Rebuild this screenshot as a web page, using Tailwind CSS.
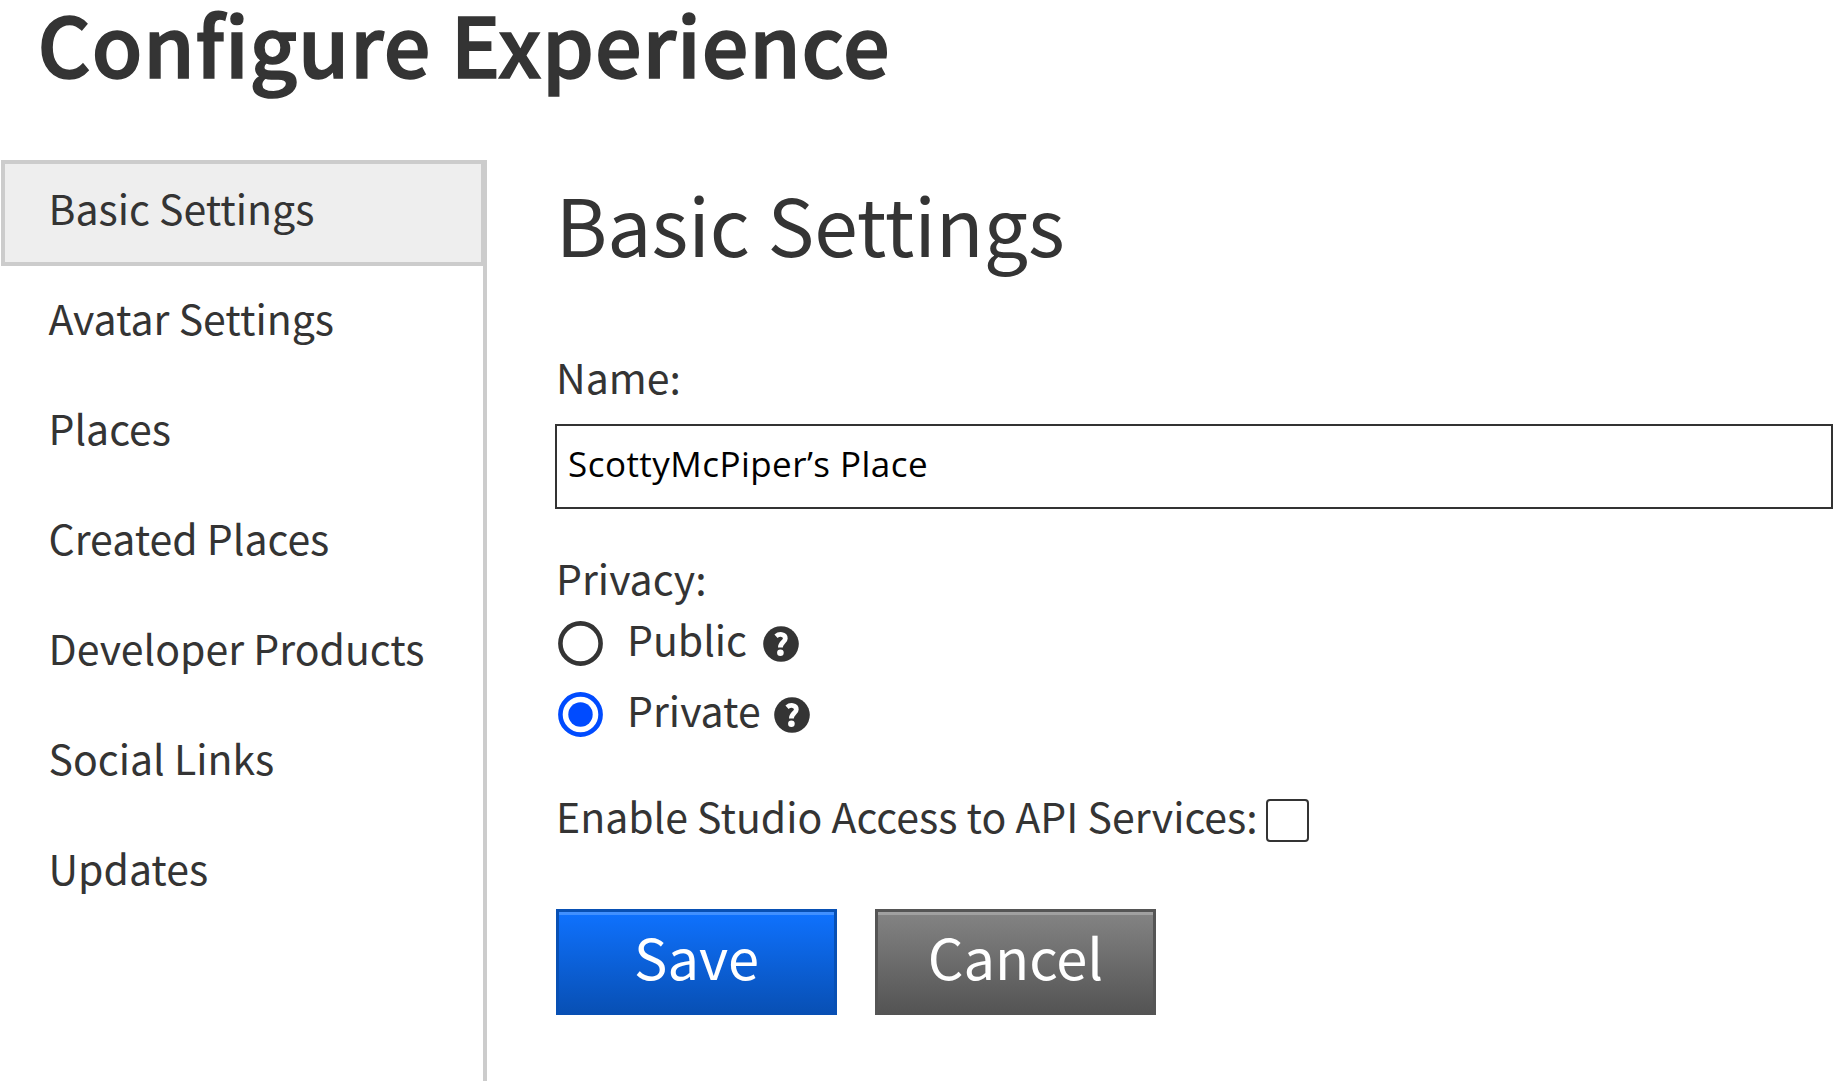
<!DOCTYPE html>
<html lang="en">
<head>
<meta charset="utf-8">
<title>Configure Experience</title>
<script src="https://cdn.jsdelivr.net/npm/@tailwindcss/browser@4"></script>
</head>
<body class="w-[1833px] h-[1081px] overflow-hidden bg-white text-[#343434] font-['Noto_Sans_CJK_SC','Noto_Sans',sans-serif] whitespace-nowrap">
<h1 class="h-[160px] pl-[37.5px] text-[82.5px] leading-[85px] font-medium tracking-[0.85px] [-webkit-text-stroke:1.6px_#343434]">Configure Experience</h1>
<div class="flex h-[921px]">
  <nav class="w-[487px] shrink-0 border-r-4 border-[#cccccc] text-[41px] leading-[103px]">
    <a class="block ml-px w-[486px] h-[106px] border-4 border-r-[6px] border-[#cccccc] bg-[#eeeeee] pl-[43.5px] leading-[86px]">Basic Settings</a>
    <a class="block h-[110px] pl-[48.5px]">Avatar Settings</a>
    <a class="block h-[110px] pl-[48.5px]">Places</a>
    <a class="block h-[110px] pl-[48.5px]">Created Places</a>
    <a class="block h-[110px] pl-[48.5px]">Developer Products</a>
    <a class="block h-[110px] pl-[48.5px]">Social Links</a>
    <a class="block h-[110px] pl-[48.5px]">Updates</a>
  </nav>
  <main class="grow pl-[68px] text-[41px]">
    <h2 class="pt-[13px] pl-[0.7px] text-[78.5px] leading-[100px]">Basic Settings</h2>
    <div class="mt-[73px] pl-px h-[78px] leading-[60px]">Name:</div>
    <div class="h-[85px] border-2 border-[#333333] pl-[11px] text-[35px] leading-[75px] tracking-[0.46px] text-black font-['Open_Sans',sans-serif]">ScottyMcPiper’s Place</div>
    <div class="mt-[38px] pl-px h-[60px] leading-[60px]">Privacy:</div>
    <div class="flex h-[71px] pl-[2.5px]">
      <svg class="mt-[14px] w-[45px] h-[45px]" viewBox="0 0 45 45"><circle cx="22.5" cy="22.5" r="20.1" fill="none" stroke="#343434" stroke-width="4.6"/></svg>
      <span class="ml-[24.5px] leading-[62px]">Public</span>
      <svg class="ml-[15.5px] mt-[18.5px] w-9 h-9" viewBox="0 0 36 36"><circle cx="18" cy="18" r="17.8" fill="#343434"/><path d="M13 10.2C16 7.6 22.3 7.6 22.3 12.4C22.3 16 17.4 16.4 17.4 21.6" fill="none" stroke="#fff" stroke-width="4.8"/><circle cx="17.4" cy="26.8" r="3.3" fill="#fff"/></svg>
    </div>
    <div class="flex h-[71px] pl-[2.5px]">
      <svg class="mt-[14px] w-[45px] h-[45px]" viewBox="0 0 45 45"><circle cx="22.5" cy="22.5" r="20.1" fill="none" stroke="#004bff" stroke-width="4.6"/><circle cx="22.5" cy="22.5" r="12.2" fill="#004bff"/></svg>
      <span class="ml-[24.5px] leading-[62px]">Private</span>
      <svg class="ml-[13.3px] mt-[18.5px] w-9 h-9" viewBox="0 0 36 36"><circle cx="18" cy="18" r="17.8" fill="#343434"/><path d="M13 10.2C16 7.6 22.3 7.6 22.3 12.4C22.3 16 17.4 16.4 17.4 21.6" fill="none" stroke="#fff" stroke-width="4.8"/><circle cx="17.4" cy="26.8" r="3.3" fill="#fff"/></svg>
    </div>
    <div class="flex mt-[36px] pl-px h-[60px]">
      <span class="leading-[60px]">Enable Studio Access to API Services:</span>
      <span class="ml-2 mt-[14px] w-[43px] h-[43px] rounded border-2 border-[#343434]"></span>
    </div>
    <div class="flex mt-[64px] pl-px gap-[38px] text-[56px] leading-[81px] text-white text-center">
      <div class="w-[281px] h-[106px] border-[3px] border-b-0 border-[#0850b4] bg-linear-to-b from-[#0f72ff] to-[#084fb3]"><div class="h-[3px] bg-[#4190ff]"></div><div>Save</div></div>
      <div class="w-[281px] h-[106px] border-[3px] border-b-0 border-[#555555] bg-linear-to-b from-[#848484] to-[#535353]"><div class="h-[3px] bg-[#a0a0a0]"></div><div>Cancel</div></div>
    </div>
  </main>
</div>
</body>
</html>
